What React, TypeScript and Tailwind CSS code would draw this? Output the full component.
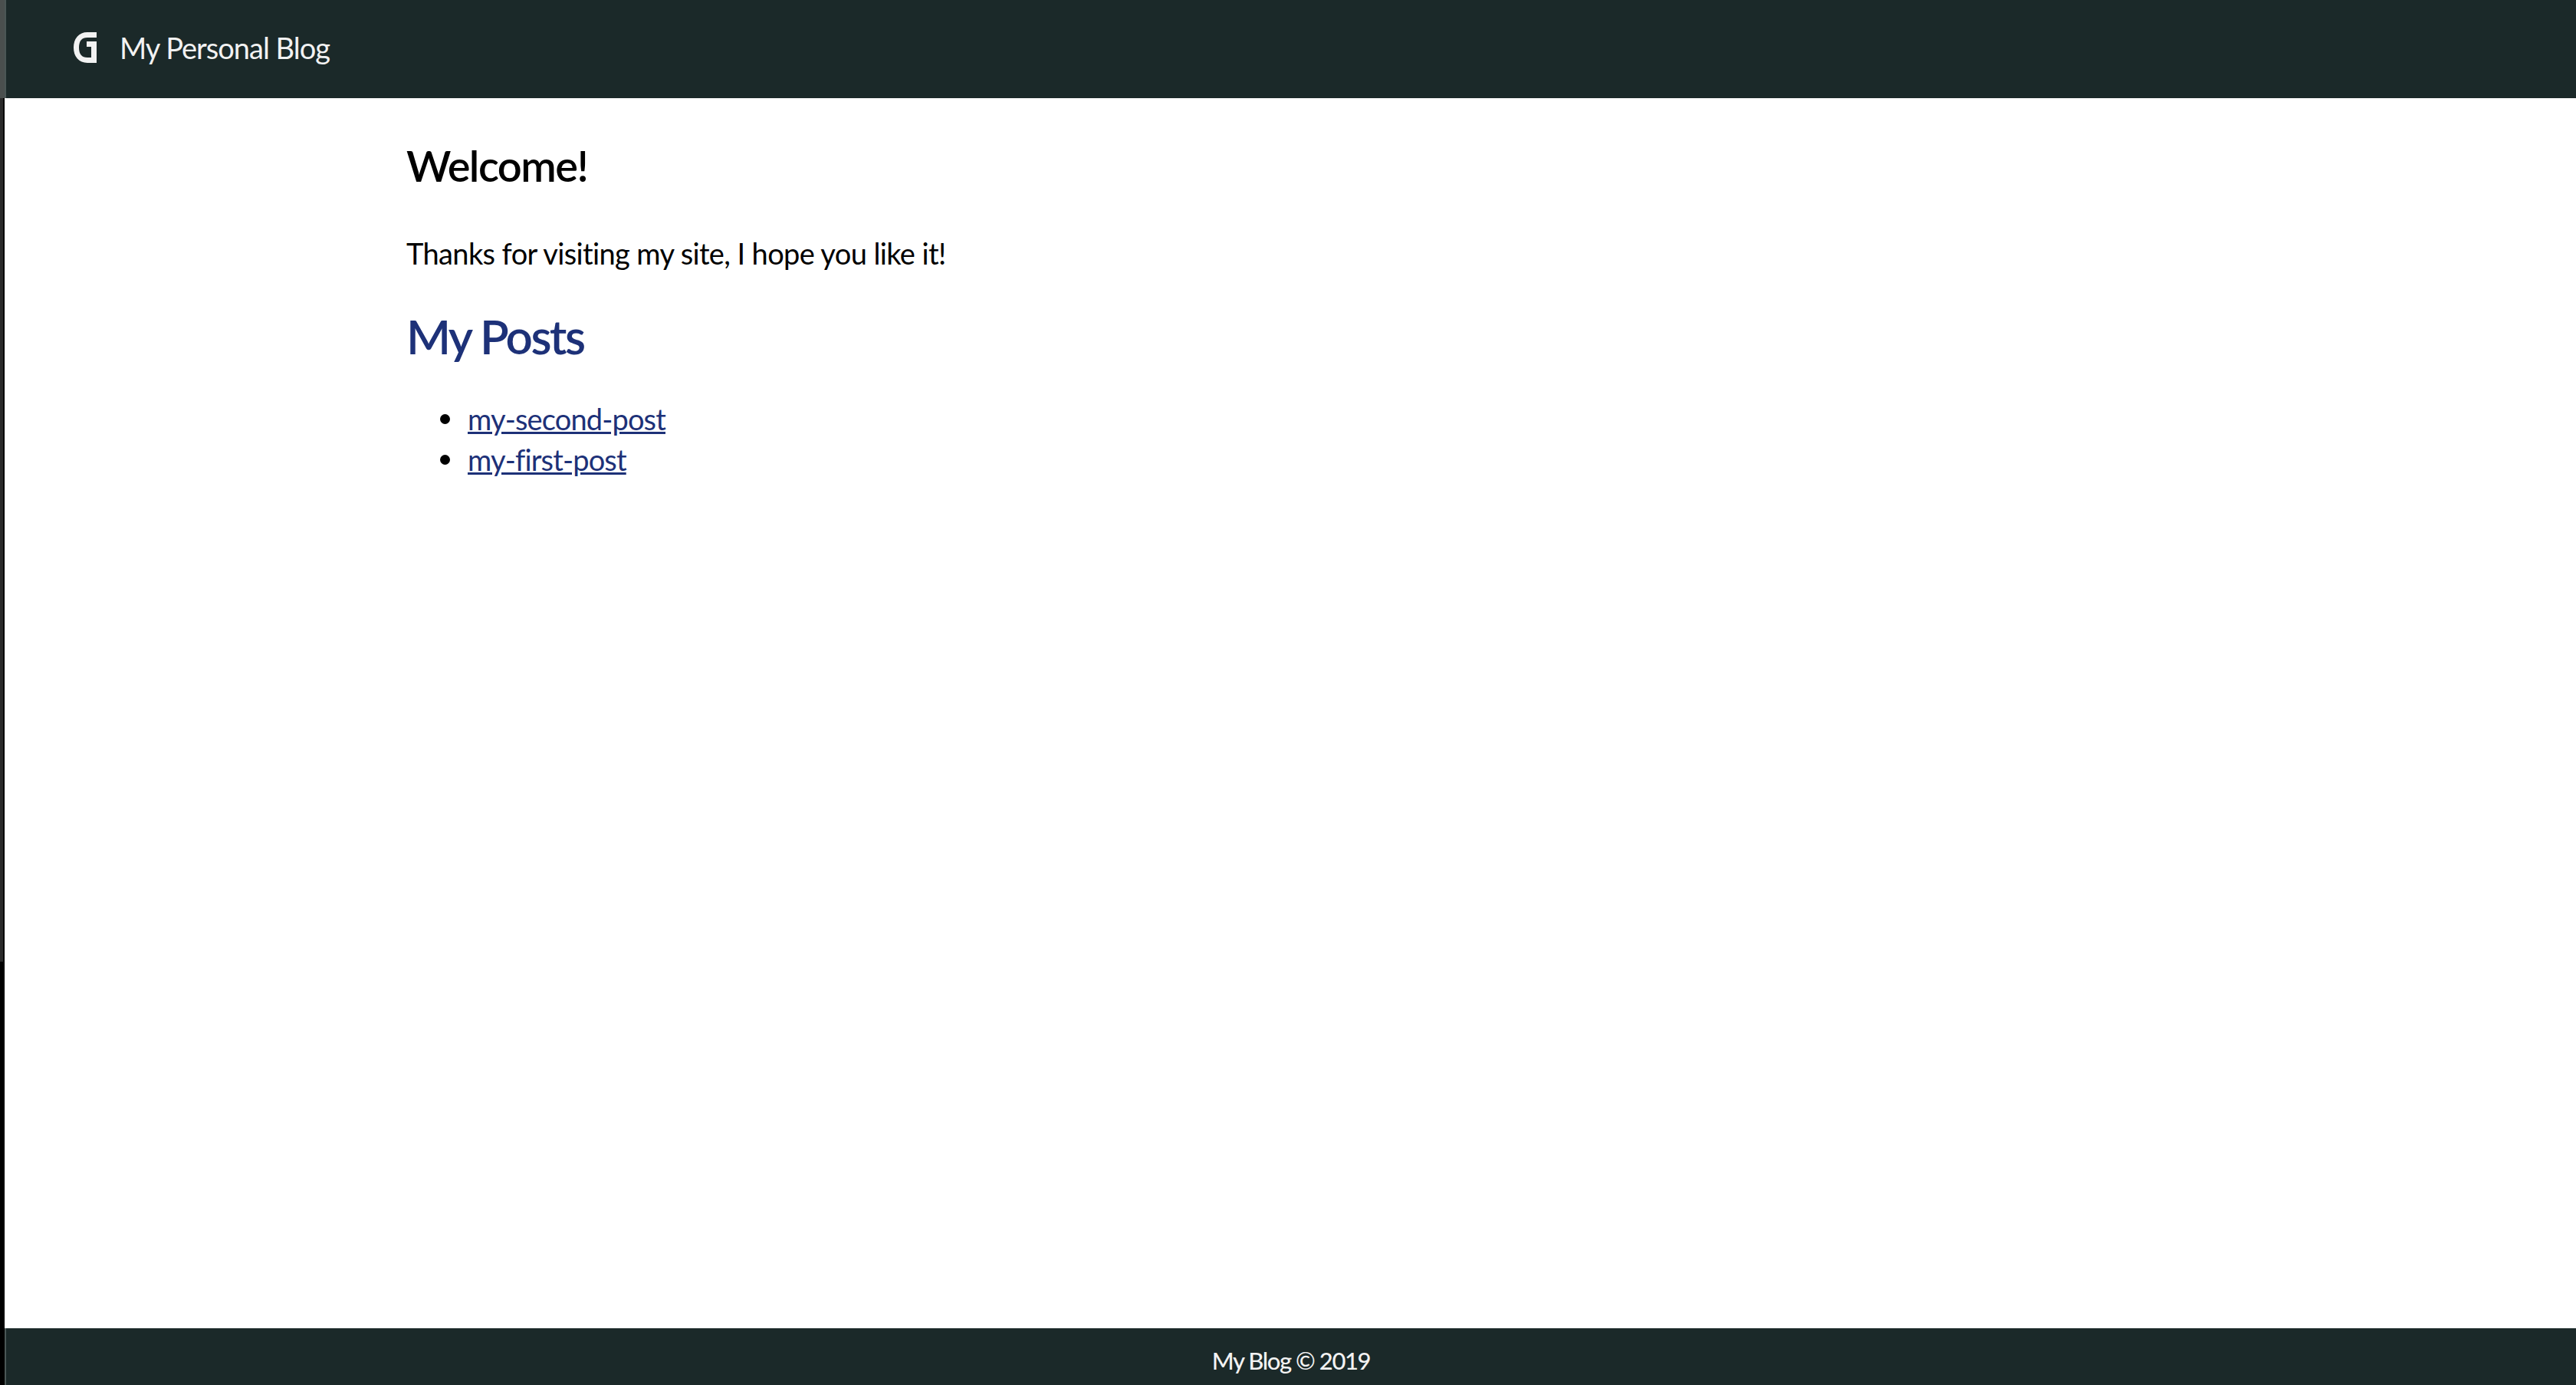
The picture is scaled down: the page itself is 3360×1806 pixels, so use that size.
const sans = "font-['Lato','Noto_Sans',sans-serif]";

function Logo() {
  return (
    <svg viewBox="0 0 30 40" className="w-[30px] h-[40px]" fill="none">
      <path
        d="M30 3.500H18C9 3.500 3.500 10 3.500 20S9 36.500 18 36.500H26.500V15.500H17"
        stroke="#f2f2f2"
        strokeWidth="7"
      />
    </svg>
  );
}

function PostLink({ href, label }: { href: string; label: string }) {
  return (
    <li className="flex items-center gap-[23px]">
      <span className="w-[13px] h-[13px] rounded-full bg-black" />
      <a className="underline text-[#1d3178]" href={href}>{label}</a>
    </li>
  );
}

export default function App() {
  return (
    <div className={`flex h-[1806px] w-full bg-white ${sans}`}>
      <div className="w-[6px] shrink-0 flex flex-col bg-black">
        <div className="h-[128px] bg-[#4a4f4e]" />
        <div className="h-[1126px] w-[4px] bg-[#2a2a2a]" />
      </div>
      <div className="flex-1 flex flex-col min-w-0">
        <header className="h-[128px] bg-[#1b2929] border-l-2 border-[#4a5655] flex items-center pb-[4px] pl-[88px] gap-[30px] text-[#f2f2f2]">
          <Logo />
          <span className="text-[38px] tracking-[-1px]">My Personal Blog</span>
        </header>
        <main className="flex-1 pl-[524px] pt-[58px] text-black">
          <h1 className="text-[56px] leading-[60px] font-semibold tracking-[-1.500px]">Welcome!</h1>
          <p className="mt-[58px] text-[38px] leading-[52px] tracking-[-0.620px]">
            Thanks for visiting my site, I hope you like it!
          </p>
          <h2 className="mt-[44px] text-[62px] leading-[76px] font-semibold tracking-[-2.600px] text-[#1d3178]">
            My Posts
          </h2>
          <ul className="mt-[44px] pl-[44px] text-[38px] leading-[53px] tracking-[-0.850px]">
            <PostLink href="#second" label="my-second-post" />
            <PostLink href="#first" label="my-first-post" />
          </ul>
        </main>
        <footer className="h-[74px] bg-[#1b2929] border-l-2 border-[#4a5655] flex items-center justify-center pt-[10px] text-[#f2f2f2] text-[31px] font-medium tracking-[-1.400px]">
          My Blog © 2019
        </footer>
      </div>
    </div>
  );
}
